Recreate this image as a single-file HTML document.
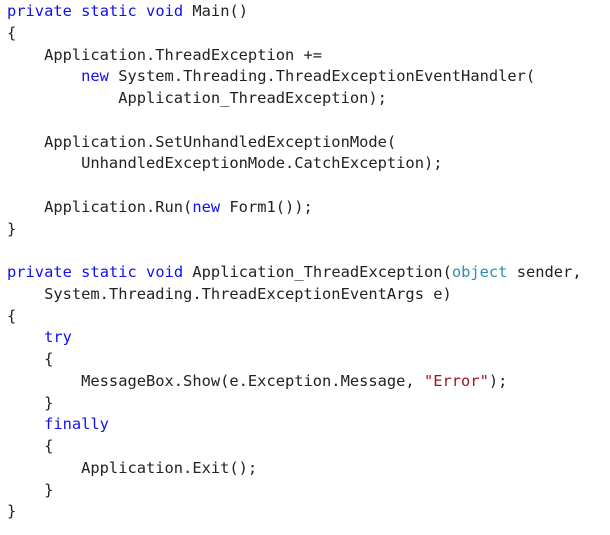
<!DOCTYPE html>
<html><head><meta charset="utf-8"><style>
html,body{margin:0;padding:0;background:#fff;width:610px;height:535px;overflow:hidden}
pre{position:absolute;left:7px;top:1px;margin:0;font-family:"DejaVu Sans Mono",monospace;font-size:15.4px;line-height:21.75px;color:#222;letter-spacing:0}
.k{color:#1010f0}.t{color:#2b91af}.s{color:#a31515}
</style></head><body><pre><span class="k">private</span> <span class="k">static</span> <span class="k">void</span> Main()
{
    Application.ThreadException +=
        <span class="k">new</span> System.Threading.ThreadExceptionEventHandler(
            Application_ThreadException);

    Application.SetUnhandledExceptionMode(
        UnhandledExceptionMode.CatchException);

    Application.Run(<span class="k">new</span> Form1());
}

<span class="k">private</span> <span class="k">static</span> <span class="k">void</span> Application_ThreadException(<span class="t">object</span> sender,
    System.Threading.ThreadExceptionEventArgs e)
{
    <span class="k">try</span>
    {
        MessageBox.Show(e.Exception.Message, <span class="s">"Error"</span>);
    }
    <span class="k">finally</span>
    {
        Application.Exit();
    }
}</pre></body></html>
